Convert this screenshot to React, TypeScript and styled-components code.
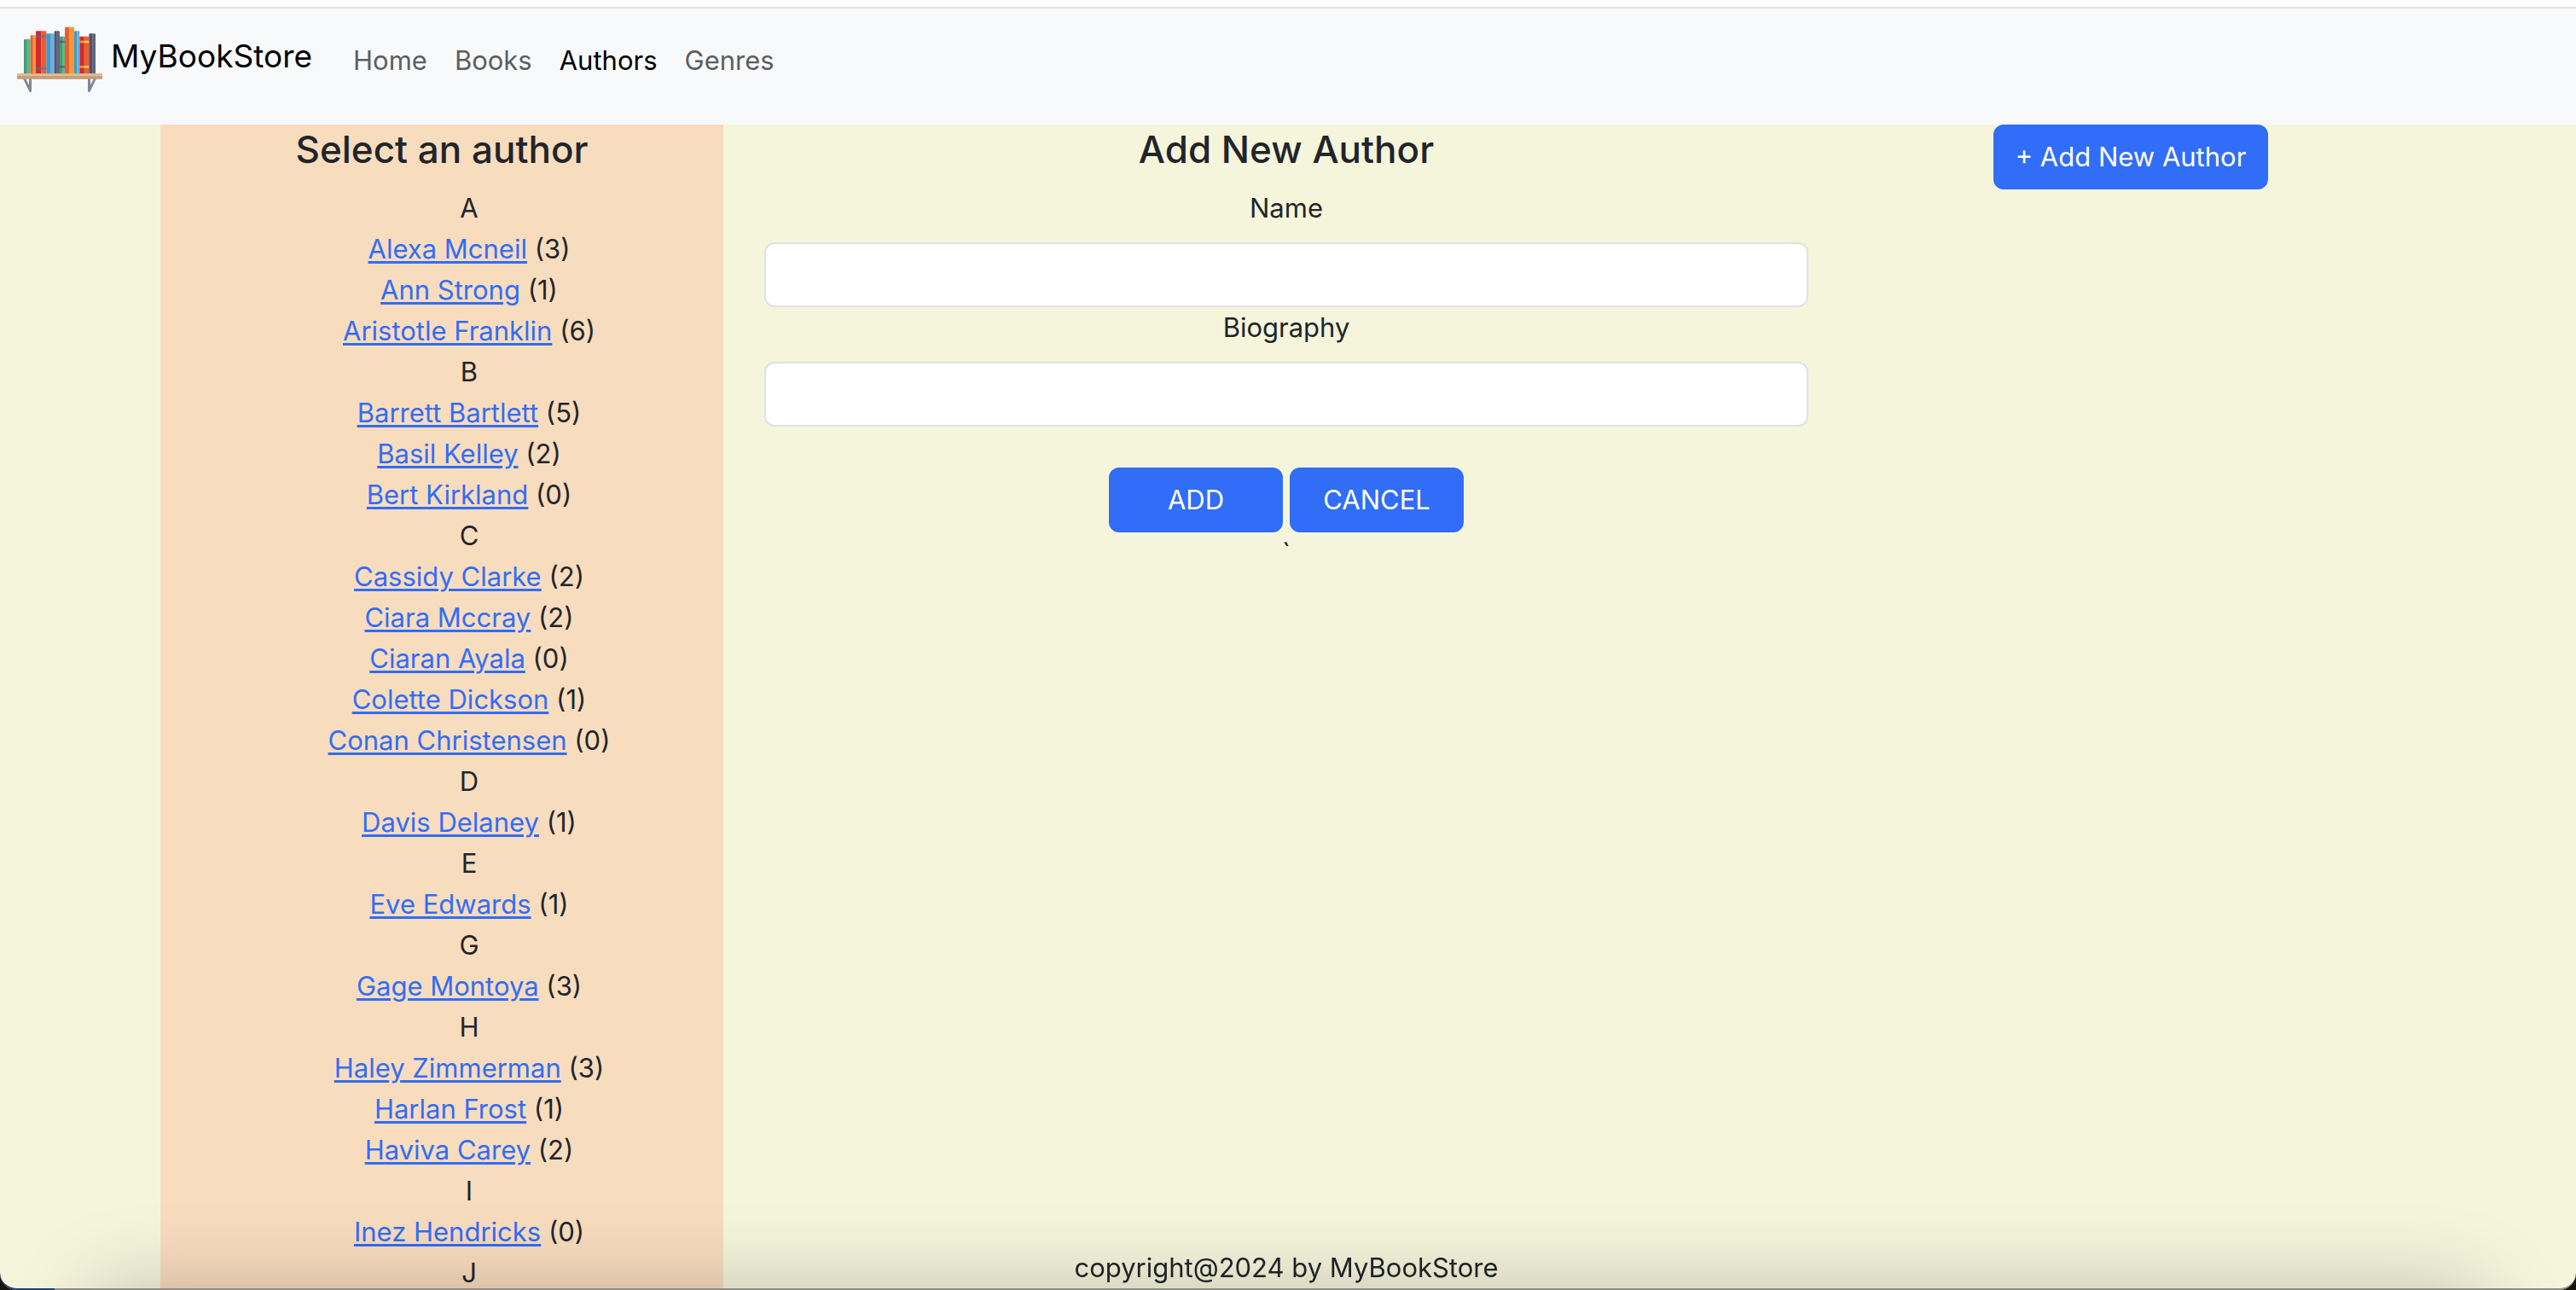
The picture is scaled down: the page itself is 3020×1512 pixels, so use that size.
import React from "react";
import styled, { createGlobalStyle } from "styled-components";

const GlobalStyle = createGlobalStyle`
  *, *::before, *::after { box-sizing: border-box; }
  body {
    margin: 0;
    background: #f5f5dc;
    color: #212529;
    font-family: Inter, "Liberation Sans", sans-serif;
    font-size: 31px;
    line-height: 48px;
  }
`;

const Page = styled.div`
  display: flex;
  flex-direction: column;
  height: 100vh;
  overflow: hidden;
`;

const TopStrip = styled.div`
  flex: none;
  height: 10px;
  background: #ffffff;
  border-bottom: 2px solid #e2e3e4;
`;

const Navbar = styled.header`
  flex: none;
  display: flex;
  align-items: center;
  gap: 32px;
  padding: 6px 20px 20px;
  background: #f8f9fb;
`;

const Brand = styled.a`
  display: flex;
  align-items: center;
  gap: 10px;
  padding-bottom: 10px;
  color: #000000;
  font-size: 37px;
  line-height: 60px;
  text-decoration: none;
`;

const Logo = styled.svg`
  display: block;
  width: 100px;
  height: 100px;
`;

const NavLinks = styled.nav`
  display: flex;
`;

const NavLink = styled.a<{ $active?: boolean }>`
  padding: 16px;
  color: ${(p) => (p.$active ? "#000000" : "#5d5e5f")};
  text-decoration: none;
`;

const Content = styled.main`
  flex: 1;
  min-height: 0;
  display: grid;
  grid-template-columns: 1fr 2fr 1fr;
  width: 100%;
  max-width: 2644px;
  margin: 0 auto;
  padding-right: 4px;
  text-align: center;
`;

const Sidebar = styled.aside`
  background: #f8dcbe;
`;

const Title = styled.h2`
  margin: 0 0 16px;
  font-size: 44px;
  font-weight: 500;
  line-height: 58px;
`;

const AuthorList = styled.ul`
  margin: 0;
  padding: 0 0 0 64px;
  list-style: none;
`;

const AuthorLink = styled.a`
  color: #316df6;
  text-decoration: underline;
  text-decoration-thickness: 3px;
  text-underline-offset: 3px;
`;

const Form = styled.form`
  padding: 0 48px;
`;

const Label = styled.label`
  display: block;
  margin-bottom: 16px;
`;

const TextInput = styled.input`
  display: block;
  width: 100%;
  padding: 12px 24px;
  border: 2px solid #dee2e6;
  border-radius: 12px;
  background: #ffffff;
  color: inherit;
  font: inherit;
`;

const Actions = styled.div`
  display: flex;
  justify-content: center;
  gap: 8px;
  margin-top: 48px;
`;

const Button = styled.button<{ $wide?: boolean }>`
  min-width: ${(p) => (p.$wide ? "204px" : "0")};
  padding: 12px 24px;
  border: 2px solid #316df6;
  border-radius: 12px;
  background: #316df6;
  color: #ffffff;
  font: inherit;
`;

const Footer = styled.footer`
  position: fixed;
  right: 4px;
  bottom: 2px;
  left: 0;
  text-align: center;
`;

const BottomShade = styled.div`
  position: fixed;
  top: 100vh;
  right: 110px;
  left: 110px;
  height: 200px;
  box-shadow: 0 0 100px rgba(0, 0, 0, 0.22);
  pointer-events: none;
`;

const WindowEdge = styled.div`
  position: fixed;
  inset: 0;
  overflow: hidden;
  pointer-events: none;

  &::before {
    content: "";
    position: absolute;
    inset: -40px 0 0;
    border-bottom: 2px solid #8b8b87;
    border-radius: 0 0 20px 20px;
    box-shadow: 0 0 0 20px #16150c;
  }

  &::after {
    content: "";
    position: absolute;
    bottom: 0;
    left: 0;
    width: 64px;
    height: 20px;
    border-bottom: 2px solid #173f80;
    border-bottom-left-radius: 20px;
  }
`;

type Book = {
  x: number;
  y: number;
  w: number;
  dark: string;
  light: string;
  band?: [string, string];
  bands?: [number, number];
};

const books: Book[] = [
  { x: 84, y: 108, w: 23, dark: "#459c78", light: "#57bc83" },
  { x: 107, y: 94, w: 19, dark: "#ee5b2f", light: "#f59735" },
  { x: 126, y: 79, w: 37, dark: "#cf2a2c", light: "#ee5b2f", band: ["#77586b", "#77758a"], bands: [94, 207] },
  { x: 163, y: 88, w: 28, dark: "#4598c6", light: "#66b2e3" },
  { x: 191, y: 79, w: 19, dark: "#58506a", light: "#62677f" },
  { x: 210, y: 98, w: 18, dark: "#459c78", light: "#57bc83", band: ["#58607a", "#64708a"], bands: [113, 201] },
  { x: 228, y: 65, w: 33, dark: "#ee5b2f", light: "#f59735" },
  { x: 261, y: 79, w: 19, dark: "#4598c6", light: "#66b2e3" },
  { x: 280, y: 98, w: 33, dark: "#cf2a2c", light: "#ee5b2f", band: ["#f59735", "#fdd247"], bands: [113, 201] },
  { x: 313, y: 88, w: 23, dark: "#58506a", light: "#5e647d" },
];

function BookShelf() {
  return (
    <Logo viewBox="60 18 300 300" aria-hidden="true">
      {books.map((b) => {
        const half = b.w / 2;
        return (
          <g key={b.x}>
            <path d={`M${b.x} 229V${b.y + 3}q0-3 3-3H${b.x + half}V229z`} fill={b.dark} />
            <path d={`M${b.x + half} 229V${b.y}H${b.x + b.w - 3}q3 0 3 3V229z`} fill={b.light} />
            {b.band &&
              b.bands?.map((y) => (
                <g key={y}>
                  <rect x={b.x} y={y} width={half} height={8} fill={b.band![0]} />
                  <rect x={b.x + half} y={y} width={half} height={8} fill={b.band![1]} />
                </g>
              ))}
          </g>
        );
      })}
      <path d="M81 246H90L102 269V246H111V292Q107 297 103 292z" fill="#868392" />
      <path d="M339 246H330L318 269V246H309V292Q313 297 317 292z" fill="#868392" />
      <rect x="60" y="229" width="300" height="19" rx="3" fill="#c49c75" />
      <path d="M60 238V232q0-3 3-3H357q3 0 3 3V238z" fill="#dfbb90" />
    </Logo>
  );
}

const navItems = ["Home", "Books", "Authors", "Genres"];

const groups: { letter: string; authors: [string, number][] }[] = [
  { letter: "A", authors: [["Alexa Mcneil", 3], ["Ann Strong", 1], ["Aristotle Franklin", 6]] },
  { letter: "B", authors: [["Barrett Bartlett", 5], ["Basil Kelley", 2], ["Bert Kirkland", 0]] },
  {
    letter: "C",
    authors: [
      ["Cassidy Clarke", 2],
      ["Ciara Mccray", 2],
      ["Ciaran Ayala", 0],
      ["Colette Dickson", 1],
      ["Conan Christensen", 0],
    ],
  },
  { letter: "D", authors: [["Davis Delaney", 1]] },
  { letter: "E", authors: [["Eve Edwards", 1]] },
  { letter: "G", authors: [["Gage Montoya", 3]] },
  { letter: "H", authors: [["Haley Zimmerman", 3], ["Harlan Frost", 1], ["Haviva Carey", 2]] },
  { letter: "I", authors: [["Inez Hendricks", 0]] },
  { letter: "J", authors: [] },
];

export default function App() {
  return (
    <Page>
      <GlobalStyle />
      <TopStrip />
      <Navbar>
        <Brand href="#">
          <BookShelf />
          MyBookStore
        </Brand>
        <NavLinks>
          {navItems.map((item) => (
            <NavLink key={item} href="#" $active={item === "Authors"}>
              {item}
            </NavLink>
          ))}
        </NavLinks>
      </Navbar>
      <Content>
        <Sidebar>
          <Title>Select an author</Title>
          <AuthorList>
            {groups.map((group) => (
              <React.Fragment key={group.letter}>
                <li>{group.letter}</li>
                {group.authors.map(([name, count]) => (
                  <li key={name}>
                    <AuthorLink href="#">{name}</AuthorLink> ({count})
                  </li>
                ))}
              </React.Fragment>
            ))}
          </AuthorList>
        </Sidebar>
        <Form onSubmit={(e) => e.preventDefault()}>
          <Title>Add New Author</Title>
          <Label htmlFor="name">Name</Label>
          <TextInput id="name" type="text" />
          <Label htmlFor="biography">Biography</Label>
          <TextInput id="biography" type="text" />
          <Actions>
            <Button type="submit" $wide>
              ADD
            </Button>
            <Button type="button" $wide>
              CANCEL
            </Button>
          </Actions>
          `
        </Form>
        <div>
          <Button type="button">+ Add New Author</Button>
        </div>
      </Content>
      <Footer>copyright@2024 by MyBookStore</Footer>
      <BottomShade />
      <WindowEdge />
    </Page>
  );
}
